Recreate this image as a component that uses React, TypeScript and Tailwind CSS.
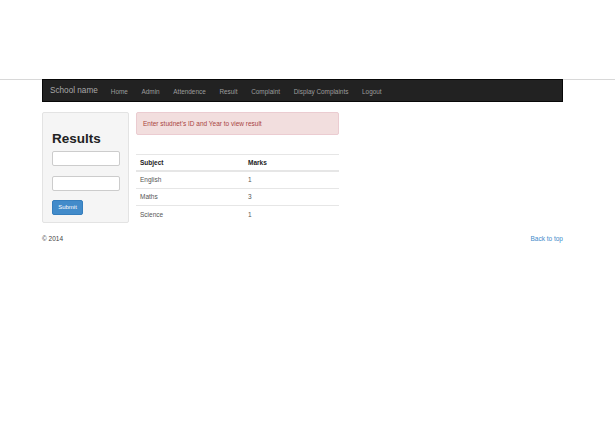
import React from 'react';

const NAV = ['Home', 'Admin', 'Attendence', 'Result', 'Complaint', 'Display Complaints', 'Logout'];

const ROWS: [string, string][] = [
  ['English', '1'],
  ['Maths', '3'],
  ['Science', '1'],
];

export default function App() {
  return (
    <div className="w-[615px] h-[424px] bg-white text-[#333]" style={{ fontFamily: '"Liberation Sans", Arial, sans-serif' }}>
      <div className="h-[79px]" />
      <div className="border-t border-[#d8d8d8]">
        <div className="ml-[42px] w-[521px]">
          {/* navbar */}
          <nav className="h-[23px] -mt-px pt-[2px] bg-[#222] border border-[#080808] flex items-center">
            <span className="ml-[7px] text-[8.2px] text-[#a8a8a8]">School name</span>
            <ul className="ml-[13px] flex items-center gap-[13.7px] text-[6.4px] text-[#9d9d9d]">
              {NAV.map((n) => (
                <li key={n}>{n}</li>
              ))}
            </ul>
          </nav>

          <div className="mt-[10px] flex items-start">
            {/* sidebar well */}
            <div className="w-[87px] h-[111px] bg-[#f5f5f5] border border-[#e3e3e3] rounded-[2px] px-[9px] pt-[19px]">
              <h1 className="text-[13.5px] font-bold text-[#222] leading-none">Results</h1>
              <input className="block mt-[5px] w-[68px] h-[15px] bg-white border border-[#ccc] rounded-[2px]" />
              <input className="block mt-[10px] w-[68px] h-[15px] bg-white border border-[#ccc] rounded-[2px]" />
              <button className="block mt-[9px] w-[31px] h-[15px] bg-[#428bca] border border-[#357ebd] rounded-[2px] text-white text-[6px] leading-none">
                Submit
              </button>
            </div>

            <div className="ml-[7px] w-[203px]">
              <div className="h-[23px] bg-[#f2dede] border border-[#ebccd1] rounded-[2px] px-[6px] flex items-center text-[6.5px] text-[#a94442]">
                Enter studnet's ID and Year to view result
              </div>

              <div className="mt-[19px] border-t border-[#e6e6e6] text-[6.5px]">
                <div className="h-[17px] pt-px flex items-center border-b-2 border-[#e6e6e6] font-bold text-[#222]">
                  <span className="pl-[4px] w-[112px]">Subject</span>
                  <span>Marks</span>
                </div>
                {ROWS.map(([s, m], i) => (
                  <div
                    key={s}
                    className={
                      i < ROWS.length - 1
                        ? 'h-[17px] flex items-center border-b border-[#e6e6e6] text-[#555]'
                        : 'h-[17px] flex items-center text-[#555]'
                    }
                  >
                    <span className="pl-[4px] w-[112px]">{s}</span>
                    <span>{m}</span>
                  </div>
                ))}
              </div>
            </div>
          </div>

          {/* footer */}
          <div className="mt-[11px] flex justify-between text-[6.5px]">
            <span className="text-[#444]">© 2014</span>
            <span className="text-[#428bca]">Back to top</span>
          </div>
        </div>
      </div>
    </div>
  );
}
